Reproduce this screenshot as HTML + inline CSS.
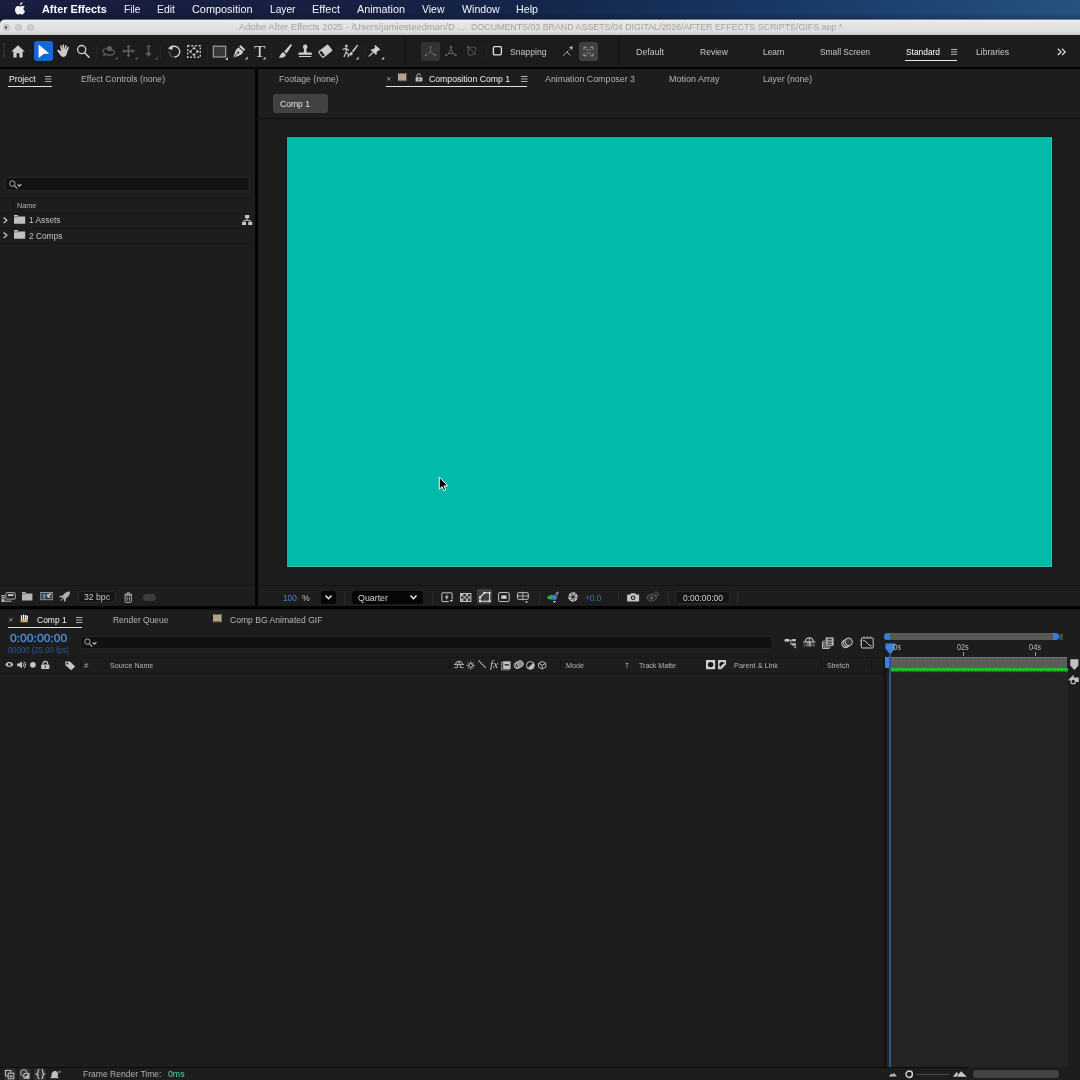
<!DOCTYPE html>
<html lang="en"><head><meta charset="utf-8"><title>Adobe After Effects 2025</title>
<style>
html,body{margin:0;padding:0;background:#1d1d1d;}
body{width:1080px;height:1080px;position:relative;overflow:hidden;font-family:"Liberation Sans",sans-serif;}
.b{position:absolute;box-sizing:border-box;}
.labels{position:absolute;left:0;top:0;width:1080px;height:1080px;will-change:transform;pointer-events:none;}
.t{position:absolute;white-space:pre;transform-origin:0 50%;line-height:1;}
svg{position:absolute;overflow:visible;}
</style></head><body>
<!-- macOS menu bar -->
<section id="menubar" aria-label="macOS menu bar">
<div class="b" style="left:0px;top:0px;width:1080px;height:24px;background:linear-gradient(180deg,rgba(0,0,0,0) 50%,rgba(0,0,0,0.22) 83%),linear-gradient(90deg,#191d3f 0%,#171f42 30%,#14264b 50%,#173762 70%,#1f4775 88%,#265282 100%);"></div>
<svg style="left:14.8px;top:2.2px" width="12" height="14.5" viewBox="0 0 12 14.5" ><path transform="scale(0.9)" fill="#f2f2f4" d="M8.3 0.2c0.1 0.9-0.3 1.7-0.8 2.3-0.5 0.6-1.3 1-2.1 0.95-0.1-0.85 0.3-1.7 0.8-2.25C6.7 0.65 7.6 0.25 8.3 0.2zM10.9 4.9c-0.9 0.55-1.5 1.4-1.5 2.5 0 1.25 0.75 2.2 1.8 2.6-0.25 0.8-0.6 1.5-1.1 2.2-0.6 0.85-1.2 1.7-2.2 1.7-0.95 0-1.2-0.55-2.3-0.55-1.05 0-1.4 0.57-2.3 0.57-0.95 0-1.6-0.9-2.2-1.75C0.1 10.7-0.5 8.3 0.6 6.3c0.6-1.1 1.7-1.8 2.9-1.8 0.95 0 1.8 0.62 2.35 0.62 0.55 0 1.6-0.75 2.7-0.64 0.45 0.02 1.7 0.18 2.35 0.42z"/></svg>
<div class="labels">
<span class="t" style="left:41.6px;top:3.65px;font-size:11px;color:#ffffff;font-weight:700;transform:scaleX(0.991);">After Effects</span>
<span class="t" style="left:123.75px;top:3.65px;font-size:11px;color:#f4f4f6;transform:scaleX(0.916);">File</span>
<span class="t" style="left:157px;top:3.65px;font-size:11px;color:#f4f4f6;transform:scaleX(0.949);">Edit</span>
<span class="t" style="left:192px;top:3.65px;font-size:11px;color:#f4f4f6;transform:scaleX(0.990);">Composition</span>
<span class="t" style="left:269.5px;top:3.65px;font-size:11px;color:#f4f4f6;transform:scaleX(0.926);">Layer</span>
<span class="t" style="left:312px;top:3.65px;font-size:11px;color:#f4f4f6;transform:scaleX(1.002);">Effect</span>
<span class="t" style="left:357px;top:3.65px;font-size:11px;color:#f4f4f6;transform:scaleX(0.981);">Animation</span>
<span class="t" style="left:422px;top:3.65px;font-size:11px;color:#f4f4f6;transform:scaleX(0.951);">View</span>
<span class="t" style="left:461.75px;top:3.65px;font-size:11px;color:#f4f4f6;transform:scaleX(0.965);">Window</span>
<span class="t" style="left:516px;top:3.65px;font-size:11px;color:#f4f4f6;transform:scaleX(0.972);">Help</span>
</div>
</section>
<!-- Window title bar -->
<section id="titlebar" aria-label="Window title bar">
<div class="b" style="left:3px;top:19px;width:1077px;height:1px;background:rgba(236,236,236,0.42);"></div>
<div class="b" style="left:0px;top:20px;width:1080px;height:15px;background:linear-gradient(180deg,#f0f0f0 0%,#e4e4e4 25%,#dedede 80%,#cacaca 100%);border-radius:4px 0 0 0;"></div>
<div class="b" style="left:2.5px;top:24px;width:7px;height:7px;background:#cfcfcf;border-radius:50%;border:0.5px solid #bdbdbd;"></div>
<div class="b" style="left:14.5px;top:24px;width:7px;height:7px;background:#cfcfcf;border-radius:50%;border:0.5px solid #bdbdbd;"></div>
<div class="b" style="left:26.5px;top:24px;width:7px;height:7px;background:#cfcfcf;border-radius:50%;border:0.5px solid #bdbdbd;"></div>
<div class="b" style="left:4.8px;top:26.3px;width:2.4px;height:2.4px;background:#555;border-radius:50%;"></div>
<div class="labels">
<span class="t" style="left:238.75px;top:22.80px;font-size:9.2px;color:#a4a4a4;transform:scaleX(1.026);">Adobe After Effects 2025 - /Users/jamiesteedman/D ...</span>
<span class="t" style="left:471px;top:22.80px;font-size:9.2px;color:#a4a4a4;transform:scaleX(0.962);">DOCUMENTS/03 BRAND ASSETS/04 DIGITAL/2026/AFTER EFFECTS SCRIPTS/GIFS.aep *</span>
</div>
</section>
<!-- Tools and workspaces -->
<section id="toolbar" aria-label="Tools and workspaces">
<div class="b" style="left:0px;top:35px;width:1080px;height:32px;background:#1c1c1c;"></div>
<div class="b" style="left:34px;top:41px;width:18.5px;height:20px;background:#1568d8;border-radius:3px;"></div>
<div class="b" style="left:421px;top:42px;width:19px;height:18.5px;background:#323232;border-radius:3px;"></div>
<div class="b" style="left:579px;top:41.6px;width:19px;height:19px;background:#414141;border-radius:3px;"></div>
<div class="b" style="left:96px;top:44px;width:1px;height:15px;background:#232323;"></div>
<div class="b" style="left:160px;top:44px;width:1px;height:15px;background:#232323;"></div>
<div class="b" style="left:207px;top:44px;width:1px;height:15px;background:#232323;"></div>
<div class="b" style="left:270.5px;top:44px;width:1px;height:15px;background:#232323;"></div>
<div class="b" style="left:337px;top:44px;width:1px;height:15px;background:#232323;"></div>
<div class="b" style="left:363.5px;top:44px;width:1px;height:15px;background:#232323;"></div>
<div class="b" style="left:405px;top:36px;width:1px;height:30px;background:#111;"></div>
<div class="b" style="left:485.5px;top:44px;width:1px;height:15px;background:#252525;"></div>
<div class="b" style="left:617.5px;top:36px;width:1px;height:30px;background:#111;"></div>
<div class="b" style="left:905px;top:59.6px;width:52px;height:1.5px;background:#e8e8e8;"></div>
<svg style="left:3px;top:43px" width="2" height="15" viewBox="0 0 2 15" ><path d="M1 0V15" stroke="#3c3c3c" stroke-width="1.6" stroke-dasharray="1.2 0.8"/></svg>
<svg style="left:11px;top:44.5px" width="14" height="13" viewBox="0 0 14 13" ><path fill="#cdcdcd" d="M7 0.3L0.3 6.6H2.4V12.4H5.6V8.2H8.4V12.4H11.6V6.6H13.7Z"/></svg>
<svg style="left:36px;top:42px" width="16" height="18" viewBox="0 0 16 18" ><path fill="#ffffff" d="M2.6 2.4L13.2 11.6L7.6 12L2.6 16Z"/></svg>
<svg style="left:56.5px;top:44px" width="13" height="13.5" viewBox="0 0 13 13.5" ><path fill="#cdcdcd" d="M4.1 7.2L3.2 2.2c-0.2-1 1.2-1.3 1.45-0.3L5.6 5.6L5.5 0.9c0-1 1.5-1 1.55 0L7.3 5.5L8.3 1.5c0.25-1 1.65-0.7 1.45 0.3L9 6.2l1.5-2.9c0.5-0.9 1.7-0.3 1.3 0.6L10.1 8.6c-0.4 2.6-1.4 4.3-3.6 4.3-2 0-2.9-1.2-3.9-2.9L0.4 6.9c-0.5-0.9 0.7-1.7 1.4-0.8Z"/></svg>
<svg style="left:76px;top:44px" width="15" height="15" viewBox="0 0 15 15" ><circle cx="5.7" cy="5.6" r="4.1" fill="none" stroke="#cdcdcd" stroke-width="1.3"/><path d="M8.7 8.7L13 13.2" stroke="#cdcdcd" stroke-width="1.6" stroke-linecap="round"/></svg>
<svg style="left:101px;top:44px" width="18" height="16" viewBox="0 0 18 16" ><circle cx="8.5" cy="4.6" r="2.6" fill="#5e5e5e"/><ellipse cx="7.6" cy="7.8" rx="5.8" ry="3.1" fill="none" stroke="#5e5e5e" stroke-width="1.3" transform="rotate(12 7.6 7.8)"/><path d="M3.3 9.3l1.2 2.4-2.7 0.3z" fill="#5e5e5e"/><path d="M16.8 12.4V15.4H13.8Z" fill="#5a5a5a"/></svg>
<svg style="left:122px;top:44px" width="16" height="16" viewBox="0 0 16 16" ><path d="M6.5 2V12M1.5 7H11.5" stroke="#5e5e5e" stroke-width="1.3"/><circle cx="6.5" cy="7" r="1.6" fill="#5e5e5e"/><path fill="#5e5e5e" d="M6.5 0.6L8.6 3.2H4.4ZM6.5 13.4L8.6 10.8H4.4ZM0.1 7L2.7 4.9V9.1ZM12.9 7L10.3 4.9V9.1Z"/><path d="M15.8 12.4V15.4H12.8Z" fill="#5a5a5a"/></svg>
<svg style="left:143px;top:44px" width="16" height="16" viewBox="0 0 16 16" ><path d="M5.5 2.2V10.5M3.7 2.2H7.3" stroke="#5e5e5e" stroke-width="1.4"/><path fill="#5e5e5e" d="M5.5 13L2.2 8.8H8.8Z"/><path d="M14.6 12.4V15.4H11.6Z" fill="#5a5a5a"/></svg>
<svg style="left:167px;top:44px" width="15" height="15" viewBox="0 0 15 15" ><path d="M3.2 4.1A5.4 5.4 0 1 1 7.6 13" fill="none" stroke="#cdcdcd" stroke-width="1.4"/><path d="M7.6 13A5.4 5.4 0 0 1 2.3 6.6" fill="none" stroke="#9a9a9a" stroke-width="1.3" stroke-dasharray="1 1.3"/><path fill="#cdcdcd" d="M0.9 4.3L5.6 1.1L5.4 6.2Z"/></svg>
<svg style="left:187px;top:44.5px" width="14" height="13" viewBox="0 0 14 13" ><rect x="0.7" y="0.7" width="12.6" height="11.6" fill="none" stroke="#bdbdbd" stroke-width="1.4" stroke-dasharray="2 1.6"/><path fill="#c8c8c8" d="M7 1.6L9 4.2H5ZM7 11.4L9 8.8H5ZM1.8 6.5L4.6 4.5V8.5ZM12.2 6.5L9.4 4.5V8.5Z"/><rect x="5.6" y="5.1" width="2.8" height="2.8" fill="#0e0e0e"/></svg>
<svg style="left:212px;top:44.5px" width="17" height="16" viewBox="0 0 17 16" ><rect x="1.3" y="1.2" width="12.4" height="10.8" fill="#383838" stroke="#a8a8a8" stroke-width="1.1"/><path d="M16 11.9V14.9H13Z" fill="#bdbdbd"/></svg>
<svg style="left:232px;top:44px" width="17" height="16" viewBox="0 0 17 16" ><path fill="#cdcdcd" d="M8.6 1.1L13.3 5.4L11.8 7L7.1 2.7ZM6.6 3.4L11.1 7.6C10.6 10.4 9.3 11.3 1.2 13.6C3.6 6.2 4.2 4.4 6.6 3.4ZM1.9 12.9L5.6 9.2" /><path d="M1.6 13.2L5.9 8.9" stroke="#1d1d1d" stroke-width="0.9"/><circle cx="6.3" cy="8.5" r="1" fill="#1d1d1d"/><path d="M15.6 12.4V15.4H12.6Z" fill="#bdbdbd"/></svg>
<svg style="left:278px;top:44px" width="15" height="15" viewBox="0 0 15 15" ><path fill="#cdcdcd" d="M12.3 0.5c0.9-0.5 1.9 0.4 1.3 1.3L8.6 9.6L6.2 7.4ZM5.4 8.2L7.8 10.4C7.6 12.8 5.2 14.2 0.6 13.4C2.8 12.4 2.2 8.8 5.4 8.2Z"/></svg>
<svg style="left:297.5px;top:44px" width="15" height="14" viewBox="0 0 15 14" ><circle cx="7.2" cy="2.9" r="2.3" fill="#cdcdcd"/><path fill="#cdcdcd" d="M6.1 4.5H8.3L8.7 8.4H13.2c0.5 0 0.7 0.3 0.7 0.7V10.8H0.5V9.1c0-0.4 0.2-0.7 0.7-0.7H5.7ZM1 11.9H13.4V13H1Z"/></svg>
<svg style="left:317.5px;top:43.5px" width="15" height="15" viewBox="0 0 15 15" ><g transform="rotate(-38 7.3 7.2)"><rect x="1.2" y="3.5" width="12" height="7.4" rx="0.8" fill="#cdcdcd"/><rect x="2" y="4.3" width="2.4" height="5.8" fill="#1d1d1d"/><rect x="1.2" y="3.5" width="12" height="7.4" rx="0.8" fill="none" stroke="#cdcdcd" stroke-width="0.8"/></g></svg>
<svg style="left:342px;top:44px" width="18" height="16" viewBox="0 0 18 16" ><circle cx="4.3" cy="2" r="1.5" fill="#bdbdbd"/><path d="M1 5.3L4.3 4.4L6.6 6.3M4.3 4.4L4.1 8.2L2.2 12.6M4.1 8.2L6.3 10L6.2 12.8" fill="none" stroke="#bdbdbd" stroke-width="1.3" stroke-linejoin="round" stroke-linecap="round"/><path fill="#cdcdcd" d="M15.2 0.8c0.6-0.4 1.2 0.2 0.9 0.8L11.4 8.3L10 7.1ZM9.3 7.7L10.9 9C10.8 10.9 9.3 11.9 6.4 11.5C7.8 10.8 7.4 8.4 9.3 7.7Z"/><path d="M16.6 12.4V15.4H13.6Z" fill="#bdbdbd"/></svg>
<svg style="left:367.5px;top:44px" width="18" height="16" viewBox="0 0 18 16" ><path fill="#cdcdcd" d="M7.3 0.9L12.4 5.6L11.3 6.6L10.5 6.3L8.6 8.3C9 9.4 8.8 10.3 8.1 11.1L2.4 5.8C3.2 5.1 4.2 5 5.2 5.3L7.1 3.4L6.4 2Z"/><path d="M4.8 8.6L1.1 12.1" stroke="#cdcdcd" stroke-width="1.3" stroke-linecap="round"/><path d="M16.2 12.4V15.4H13.2Z" fill="#bdbdbd"/></svg>
<svg style="left:421px;top:42px" width="20" height="19" viewBox="0 0 20 19" ><path d="M9.5 9.8V5.000000000000001M9.5 9.8L4.8 13.200000000000001M9.5 9.8L14.2 13.200000000000001" stroke="#6c6c6c" stroke-width="0.9" fill="none"/><rect x="8.6" y="4.1" width="1.8" height="1.8" fill="#6c6c6c"/><rect x="3.9" y="12.3" width="1.8" height="1.8" fill="#6c6c6c"/><rect x="13.3" y="12.3" width="1.8" height="1.8" fill="#6c6c6c"/></svg>
<svg style="left:441px;top:42px" width="20" height="19" viewBox="0 0 20 19" ><path d="M10 9.8V5.000000000000001M10 9.8L5.3 13.200000000000001M10 9.8L14.7 13.200000000000001" stroke="#6c6c6c" stroke-width="0.9" fill="none"/><rect x="9.1" y="4.1" width="1.8" height="1.8" fill="#6c6c6c"/><rect x="4.4" y="12.3" width="1.8" height="1.8" fill="#6c6c6c"/><rect x="13.8" y="12.3" width="1.8" height="1.8" fill="#6c6c6c"/><path d="M10 7.200000000000001L7.5 11.5H12.5Z" fill="#1c1c1c" stroke="#6c6c6c" stroke-width="0.9"/></svg>
<svg style="left:462px;top:42px" width="20" height="19" viewBox="0 0 20 19" ><g stroke="#606060" stroke-width="0.9" fill="none"><path d="M5.6 4.6L14 13M5.6 4.6h2.2M5.6 4.6v2.2"/><path d="M7 6.6C9 5 12 4.6 13.4 5.4C14 7 13.4 10 12 12C10 13.4 7.4 13.6 6.4 12.8C5.8 11 6 8.4 7 6.6Z"/></g></svg>
<svg style="left:492px;top:45px" width="11" height="11.5" viewBox="0 0 11 11.5" ><rect x="1.4" y="1.6" width="8" height="8.3" rx="1.3" fill="#1b1b1b" stroke="#e2e2e2" stroke-width="1.3"/></svg>
<svg style="left:562px;top:45px" width="12" height="12" viewBox="0 0 12 12" ><g stroke="#a8a8a8" stroke-width="1" fill="none"><path d="M1.2 10.8L5 7L8.4 10.4"/><path d="M5 7L8 4" stroke-dasharray="1.4 1"/></g><path fill="#c4c4c4" d="M10.8 1.2L10 5L7.1 2.1Z"/></svg>
<svg style="left:583px;top:45.5px" width="12" height="12" viewBox="0 0 12 12" ><g stroke="#a6a6a6" stroke-width="1" fill="none"><path d="M1 3.6V1.2H3.6M7.4 1.2H10V3.6M10 7.4V9.8H7.4M3.6 9.8H1V7.4"/><path d="M4 4.4V3.6H4.8M6.2 3.6H7V4.4M7 6.6V7.4H6.2M4.8 7.4H4V6.6"/></g></svg>
<svg style="left:951px;top:48.8px" width="6.2" height="5.8" viewBox="0 0 6.2 5.8" ><path d="M0 0.5H6.2M0 2.9H6.2M0 5.3H6.2" stroke="#c8c8c8" stroke-width="0.9"/></svg>
<svg style="left:1057px;top:47.5px" width="10" height="8" viewBox="0 0 10 8" ><path d="M0.8 0.8L4 3.9L0.8 7M5 0.8L8.2 3.9L5 7" fill="none" stroke="#d8d8d8" stroke-width="1.3"/></svg>
<svg style="left:263.4px;top:56.8px" width="3" height="3" viewBox="0 0 3 3" ><path d="M2.6 -0.4V2.6H-0.4Z" fill="#bdbdbd"/></svg>
<div class="labels">
<span class="t" style="left:509.5px;top:47.20px;font-size:9.4px;color:#c8c8c8;transform:scaleX(0.921);">Snapping</span>
<span class="t" style="left:636px;top:47.35px;font-size:9.7px;color:#c8c8c8;transform:scaleX(0.912);">Default</span>
<span class="t" style="left:699.5px;top:47.35px;font-size:9.7px;color:#c8c8c8;transform:scaleX(0.881);">Review</span>
<span class="t" style="left:763px;top:47.35px;font-size:9.7px;color:#c8c8c8;transform:scaleX(0.868);">Learn</span>
<span class="t" style="left:820px;top:47.35px;font-size:9.7px;color:#c8c8c8;transform:scaleX(0.868);">Small Screen</span>
<span class="t" style="left:906px;top:47.35px;font-size:9.7px;color:#ffffff;transform:scaleX(0.865);">Standard</span>
<span class="t" style="left:976px;top:47.35px;font-size:9.7px;color:#c8c8c8;transform:scaleX(0.888);">Libraries</span>
<span class="t" style="left:254px;top:43.30px;font-size:17px;color:#cdcdcd;font-family:'Liberation Serif',serif;transform:scaleX(1.107);">T</span>
</div>
</section>
<!-- Project panel -->
<section id="project" aria-label="Project panel">
<div class="b" style="left:0px;top:66.5px;width:1080px;height:2px;background:#030303;"></div>
<div class="b" style="left:0px;top:68.5px;width:255px;height:538px;background:#1d1d1d;"></div>
<div class="b" style="left:8.2px;top:85.8px;width:43.5px;height:1.4px;background:#dedede;"></div>
<div class="b" style="left:4.5px;top:177px;width:245px;height:14px;background:#121212;border-radius:3px;border:1px solid #2a2a2a;"></div>
<div class="b" style="left:0px;top:197.5px;width:251px;height:1px;background:#171717;"></div>
<div class="b" style="left:0px;top:212.5px;width:251px;height:1px;background:#171717;"></div>
<div class="b" style="left:0px;top:227.5px;width:251px;height:1px;background:#171717;"></div>
<div class="b" style="left:0px;top:242.5px;width:251px;height:1px;background:#171717;"></div>
<div class="b" style="left:12.5px;top:201px;width:1px;height:10px;background:#111;"></div>
<div class="b" style="left:0px;top:585px;width:255px;height:1px;background:#141414;"></div>
<div class="b" style="left:78px;top:590.5px;width:38px;height:12.5px;background:#151515;border-radius:3px;border:1px solid #2a2a2a;"></div>
<div class="b" style="left:143px;top:594px;width:13px;height:6.5px;background:#3c3c3c;border-radius:3.5px;"></div>
<svg style="left:45px;top:75.6px" width="6.4" height="6" viewBox="0 0 6.4 6" ><path d="M0 0.5H6.4M0 3.0H6.4M0 5.5H6.4" stroke="#bdbdbd" stroke-width="0.9"/></svg>
<svg style="left:9.4px;top:180px" width="14" height="10" viewBox="0 0 14 10" ><circle cx="3.4" cy="3.6" r="2.7" fill="none" stroke="#b4b4b4" stroke-width="0.95"/><path d="M5.4 5.7L8.2 8.6" stroke="#b4b4b4" stroke-width="1.1"/><path d="M8.7 4.5L10.4 6.2L12.4 4.2" fill="none" stroke="#c0c0c0" stroke-width="1.1"/></svg>
<svg style="left:2.6px;top:217.2px" width="5" height="7" viewBox="0 0 5 7" ><path d="M0.6 0.5L3.9 3.3L0.6 6.1" fill="none" stroke="#cfcfcf" stroke-width="1.2"/></svg>
<svg style="left:2.6px;top:232.4px" width="5" height="7" viewBox="0 0 5 7" ><path d="M0.6 0.5L3.9 3.3L0.6 6.1" fill="none" stroke="#cfcfcf" stroke-width="1.2"/></svg>
<svg style="left:13.7px;top:215px" width="11.2" height="8.8" viewBox="0 0 11.2 8.8" ><path fill="#bfbfbf" d="M0 0H4.03V1.4H11.2V8.8H0Z"/><path d="M0 1.9H4.03" stroke="#1d1d1d" stroke-width="0.5"/></svg>
<svg style="left:13.7px;top:230.2px" width="11.2" height="8.8" viewBox="0 0 11.2 8.8" ><path fill="#bfbfbf" d="M0 0H4.03V1.4H11.2V8.8H0Z"/><path d="M0 1.9H4.03" stroke="#1d1d1d" stroke-width="0.5"/></svg>
<svg style="left:242px;top:215px" width="11" height="10" viewBox="0 0 11 10" ><g fill="#c4c4c4"><rect x="3" y="0" width="4.3" height="3.2"/><rect x="0" y="6.8" width="4" height="3.2"/><rect x="6.2" y="6.8" width="4" height="3.2"/></g><path d="M5.15 3V5.4M2 6.8V5.4H8.2V6.8" fill="none" stroke="#c4c4c4" stroke-width="0.9"/></svg>
<svg style="left:1px;top:592px" width="15" height="11" viewBox="0 0 15 11" ><rect x="4.9" y="0.6" width="9.4" height="6.6" rx="0.8" fill="#2a2a2a" stroke="#a0a0a0" stroke-width="1"/><rect x="7" y="2.2" width="5.4" height="1.8" fill="#c8c8c8"/><rect x="0.5" y="3" width="3" height="7" fill="#b8b8b8"/><path d="M0.5 8.6H10.6V9.8H0.5Z" fill="#a8a8a8"/><rect x="1.2" y="4" width="1.4" height="1.2" fill="#333"/><rect x="1.2" y="6" width="1.4" height="1.2" fill="#333"/></svg>
<svg style="left:21.7px;top:592px" width="10.4" height="8.4" viewBox="0 0 10.4 8.4" ><path fill="#b6b6b6" d="M0 0H3.74V1.4H10.4V8.4H0Z"/><path d="M0 1.9H3.74" stroke="#1d1d1d" stroke-width="0.5"/></svg>
<svg style="left:40px;top:592px" width="13" height="8.2" viewBox="0 0 13 8.2" ><rect width="13" height="8.2" fill="#9a9a9a"/><rect x="1.2" y="0.9" width="10.6" height="6.4" fill="#3a3a3a"/><circle cx="4.3" cy="3.6" r="1.9" fill="#3f7fd8"/><rect x="3.6" y="4.6" width="1.4" height="2.4" fill="#2fae9c"/><path d="M7 1.4L10.6 5.4H7.6Z" fill="#e8e8e8"/><rect x="8.6" y="1.6" width="2.4" height="1.6" fill="#dcdcdc"/><path d="M0.3 1.5H1M0.3 3.3H1M0.3 5.1H1M0.3 6.9H1M12 1.5H12.7M12 3.3H12.7M12 5.1H12.7M12 6.9H12.7" stroke="#222" stroke-width="0.8"/></svg>
<svg style="left:59px;top:590.8px" width="12" height="11" viewBox="0 0 12 11" ><path fill="#b0b0b0" d="M11 0.4C8 0.2 5.6 1.6 3.9 4.4L1 4.8L0.2 6.2L3 6.4L5 8.4L5.3 10.8L6.6 10.2L7 7.3C9.8 5.7 11.2 3.4 11 0.4Z"/><path fill="#b0b0b0" d="M2.6 7.4L3.9 8.7L1.4 9.9Z"/></svg>
<svg style="left:124px;top:591.5px" width="9" height="11" viewBox="0 0 9 11" ><path d="M0.4 2.3H8.2M3 2.1V0.8H5.6V2.1" fill="none" stroke="#ababab" stroke-width="1"/><path d="M1.2 3.2H7.4V9.6a0.8 0.8 0 0 1-0.8 0.8H2a0.8 0.8 0 0 1-0.8-0.8Z" fill="none" stroke="#ababab" stroke-width="1"/><path d="M3.2 4.6V8.8M5.4 4.6V8.8" stroke="#ababab" stroke-width="0.9"/></svg>
<div class="labels">
<span class="t" style="left:9.4px;top:73.70px;font-size:9.6px;color:#f0f0f0;transform:scaleX(0.894);">Project</span>
<span class="t" style="left:81px;top:73.70px;font-size:9.6px;color:#b4b4b4;transform:scaleX(0.902);">Effect Controls (none)</span>
<span class="t" style="left:17px;top:201.80px;font-size:8px;color:#b0b0b0;transform:scaleX(0.904);">Name</span>
<span class="t" style="left:28.5px;top:215.95px;font-size:9.2px;color:#c4c4c4;transform:scaleX(0.907);">1 Assets</span>
<span class="t" style="left:28.5px;top:231.55px;font-size:9.2px;color:#c4c4c4;transform:scaleX(0.908);">2 Comps</span>
<span class="t" style="left:84px;top:592.40px;font-size:9.6px;color:#c4c4c4;transform:scaleX(0.902);">32 bpc</span>
</div>
</section>
<!-- Composition viewer panel -->
<section id="viewer" aria-label="Composition viewer panel">
<div class="b" style="left:255px;top:68px;width:3px;height:538px;background:#030303;"></div>
<div class="b" style="left:258px;top:68.5px;width:822px;height:538px;background:#1d1d1d;"></div>
<div class="b" style="left:386px;top:85.8px;width:141px;height:1.4px;background:#dedede;"></div>
<div class="b" style="left:273px;top:94px;width:55px;height:19px;background:#424242;border-radius:3px;"></div>
<div class="b" style="left:258px;top:118px;width:822px;height:1px;background:#0e0e0e;"></div>
<div class="b" style="left:258px;top:119px;width:822px;height:466px;background:#1c1c1c;"></div>
<div class="b" style="left:287px;top:137px;width:765px;height:430px;background:#01baa9;box-shadow:0 0 0 1px #0e1815, inset -1px -1px 0 rgba(190,200,198,0.35);"></div>
<div class="b" style="left:258px;top:585px;width:822px;height:1px;background:#121212;"></div>
<div class="b" style="left:321px;top:591px;width:15px;height:13px;background:#060606;border-radius:3px;"></div>
<div class="b" style="left:352px;top:591px;width:71px;height:13px;background:#060606;border-radius:3px;"></div>
<div class="b" style="left:477.3px;top:589.2px;width:14.8px;height:14.7px;background:#404040;border-radius:3px;"></div>
<div class="b" style="left:675px;top:590.5px;width:55px;height:13.5px;background:#141414;border-radius:3px;border:1px solid #2a2a2a;"></div>
<div class="b" style="left:344px;top:592px;width:1px;height:12px;background:#2c2c2c;"></div>
<div class="b" style="left:432px;top:592px;width:1px;height:12px;background:#2c2c2c;"></div>
<div class="b" style="left:539px;top:592px;width:1px;height:12px;background:#2c2c2c;"></div>
<div class="b" style="left:618px;top:592px;width:1px;height:12px;background:#2c2c2c;"></div>
<div class="b" style="left:667.5px;top:592px;width:1px;height:12px;background:#2c2c2c;"></div>
<div class="b" style="left:737px;top:592px;width:1px;height:12px;background:#2c2c2c;"></div>
<svg style="left:520.5px;top:75.6px" width="6.6" height="6" viewBox="0 0 6.6 6" ><path d="M0 0.5H6.6M0 3.0H6.6M0 5.5H6.6" stroke="#bdbdbd" stroke-width="0.9"/></svg>
<svg style="left:387px;top:77.2px" width="3.6" height="3.6" viewBox="0 0 3.6 3.6" ><path d="M0.2 0.2L3.4 3.4M3.4 0.2L0.2 3.4" stroke="#a8a8a8" stroke-width="0.9"/></svg>
<svg style="left:398px;top:73.2px" width="8.4" height="8.2" viewBox="0 0 8.4 8.2" ><rect width="8.4" height="8.2" fill="#b3a484"/><rect x="0.90" y="0" width="0.9" height="1" fill="#1d1d1d"/><rect x="0.90" y="7.2" width="0.9" height="1" fill="#1d1d1d"/><rect x="2.65" y="0" width="0.9" height="1" fill="#1d1d1d"/><rect x="2.65" y="7.2" width="0.9" height="1" fill="#1d1d1d"/><rect x="4.40" y="0" width="0.9" height="1" fill="#1d1d1d"/><rect x="4.40" y="7.2" width="0.9" height="1" fill="#1d1d1d"/><rect x="6.15" y="0" width="0.9" height="1" fill="#1d1d1d"/><rect x="6.15" y="7.2" width="0.9" height="1" fill="#1d1d1d"/></svg>
<svg style="left:414.5px;top:72.5px" width="8" height="9" viewBox="0 0 8 9" ><rect x="0.6" y="4.2" width="6.8" height="4.4" rx="0.6" fill="#bdbdbd"/><path d="M2 4.2V2.4a1.7 1.7 0 0 1 3.4 0V3" fill="none" stroke="#bdbdbd" stroke-width="1"/><rect x="3.4" y="5.6" width="1.2" height="1.8" fill="#1d1d1d"/></svg>
<svg style="left:325px;top:595.4px" width="7" height="5.2" viewBox="0 0 7 5.2" ><path d="M0.5 0.6L3.5 3.85L6.5 0.6" fill="none" stroke="#f0f0f0" stroke-width="1.4"/></svg>
<svg style="left:409.5px;top:595.4px" width="7" height="5.2" viewBox="0 0 7 5.2" ><path d="M0.5 0.6L3.5 3.85L6.5 0.6" fill="none" stroke="#f0f0f0" stroke-width="1.4"/></svg>
<svg style="left:440.5px;top:591.5px" width="13" height="11" viewBox="0 0 13 11" ><rect x="0.9" y="0.8" width="10.2" height="8.8" rx="0.6" fill="none" stroke="#c4c4c4" stroke-width="1"/><path fill="#d0d0d0" d="M6.6 1.9L3.9 5.6H5.7L4.8 8.6L7.9 4.6H6Z"/><rect x="7.8" y="7.6" width="5" height="3.4" fill="#1d1d1d"/><path fill="#c8c8c8" d="M8.6 8L12 8L10.3 10Z"/></svg>
<svg style="left:460px;top:592.6px" width="11.4" height="9" viewBox="0 0 11.4 9" ><rect x="0.5" y="0.5" width="10.4" height="8" fill="#2a2a2a" stroke="#bdbdbd" stroke-width="1"/><g fill="#b4b4b4"><rect x="1" y="1" width="2.4" height="2.3"/><rect x="5.8" y="1" width="2.4" height="2.3"/><rect x="3.4" y="3.3" width="2.4" height="2.3"/><rect x="8.2" y="3.3" width="2.4" height="2.3"/><rect x="1" y="5.6" width="2.4" height="2.3"/><rect x="5.8" y="5.6" width="2.4" height="2.3"/></g></svg>
<svg style="left:478px;top:591px" width="13" height="12" viewBox="0 0 13 12" ><path d="M2 10.2H11.6V1.8H6.4L2 6.3Z" fill="none" stroke="#e4e4e4" stroke-width="1.1"/><g fill="#f0f0f0"><rect x="1.1" y="9.3" width="1.8" height="1.8"/><rect x="10.7" y="9.3" width="1.8" height="1.8"/><rect x="10.7" y="0.9" width="1.8" height="1.8"/><rect x="5.5" y="0.9" width="1.8" height="1.8"/><rect x="1.1" y="5.4" width="1.8" height="1.8"/></g></svg>
<svg style="left:498px;top:591.6px" width="12" height="10.4" viewBox="0 0 12 10.4" ><rect x="0.6" y="0.6" width="10.6" height="9" rx="1.4" fill="none" stroke="#c4c4c4" stroke-width="1"/><rect x="3.3" y="3.4" width="5.2" height="3.4" fill="#d0d0d0"/></svg>
<svg style="left:516px;top:591px" width="14" height="13" viewBox="0 0 14 13" ><rect x="1.6" y="1.7" width="10.6" height="6.6" rx="0.5" fill="none" stroke="#c0c0c0" stroke-width="1"/><path d="M6.9 0.6V9.4M0.6 5H13.2" stroke="#c0c0c0" stroke-width="0.9"/><path fill="#c8c8c8" d="M8.9 10.4H12.3L10.6 12.3Z"/></svg>
<svg style="left:547px;top:591px" width="13" height="12.4" viewBox="0 0 13 12.4" ><path fill="#8a8a8a" d="M8.2 2.4L10.6 0.2L11.7 1.2L10.6 4.6Z"/><circle cx="4" cy="6.4" r="2.3" fill="#22b040"/><path fill="#1ecb3a" d="M0.6 4.4L3.2 6.4L0.8 8.4Z"/><circle cx="7.4" cy="6.3" r="2.6" fill="#3c7ed8"/><path fill="#c8c8c8" d="M5.6 10H9.2L7.4 11.9Z"/></svg>
<svg style="left:567.5px;top:591.8px" width="10" height="10" viewBox="0 0 10 10" ><circle cx="5" cy="5" r="4.7" fill="#c6c6c6"/><circle cx="5" cy="5" r="1.5" fill="#1d1d1d"/><g stroke="#1d1d1d" stroke-width="0.8"><path d="M5 3.5L8.4 1.6M6.4 4.4L9.6 6.2M6.2 6L6 9.6M5 6.5L1.6 8.4M3.6 5.6L0.4 3.8M3.8 4L4 0.4"/></g></svg>
<svg style="left:627px;top:593.2px" width="12.2" height="8.6" viewBox="0 0 12.2 8.6" ><path fill="#c2c2c2" d="M0.8 1.5H3.2L4 0.2H8.2L9 1.5H11.4a0.7 0.7 0 0 1 0.7 0.7V7.8a0.7 0.7 0 0 1-0.7 0.7H0.8a0.7 0.7 0 0 1-0.7-0.7V2.2a0.7 0.7 0 0 1 0.7-0.7Z"/><circle cx="6.1" cy="4.8" r="2.3" fill="#1d1d1d"/><circle cx="6.1" cy="4.8" r="1.2" fill="#c2c2c2"/></svg>
<svg style="left:645.5px;top:591px" width="13" height="11" viewBox="0 0 13 11" ><path d="M0.6 6.8C2.4 4.2 4 3.4 5.6 3.4S8.8 4.2 10.6 6.8C8.8 9.3 7.2 10.2 5.6 10.2S2.4 9.3 0.6 6.8Z" fill="none" stroke="#585858" stroke-width="1.1"/><circle cx="5.6" cy="6.8" r="1.9" fill="#585858"/><path d="M7.4 1.9H8.3L8.8 1.1H11L11.5 1.9H12.3V5H9.6" fill="none" stroke="#585858" stroke-width="0.9"/><circle cx="9.9" cy="3.3" r="0.9" fill="#585858"/></svg>
<svg style="left:437.6px;top:476px" width="12" height="16" viewBox="0 0 12 16" ><g transform="translate(1.3,1) scale(0.74)"><path d="M0 0V16.5L3.8 12.9L6.2 18.5L8.7 17.4L6.3 12H11.4Z" fill="#000" stroke="#fff" stroke-width="1.3" stroke-linejoin="round"/></g></svg>
<div class="labels">
<span class="t" style="left:278.5px;top:73.70px;font-size:9.6px;color:#b4b4b4;transform:scaleX(0.907);">Footage (none)</span>
<span class="t" style="left:429.3px;top:73.70px;font-size:9.6px;color:#f0f0f0;transform:scaleX(0.905);">Composition Comp 1</span>
<span class="t" style="left:545px;top:73.70px;font-size:9.6px;color:#b4b4b4;transform:scaleX(0.922);">Animation Composer 3</span>
<span class="t" style="left:668.5px;top:73.70px;font-size:9.6px;color:#b4b4b4;transform:scaleX(0.938);">Motion Array</span>
<span class="t" style="left:763px;top:73.70px;font-size:9.6px;color:#b4b4b4;transform:scaleX(0.901);">Layer (none)</span>
<span class="t" style="left:279.9px;top:99.40px;font-size:9.7px;color:#e0e0e0;transform:scaleX(0.884);">Comp 1</span>
<span class="t" style="left:282.7px;top:593.05px;font-size:9.7px;color:#4682d4;transform:scaleX(0.853);">100</span>
<span class="t" style="left:301.7px;top:593.05px;font-size:9.7px;color:#c4c4c4;transform:scaleX(0.893);">%</span>
<span class="t" style="left:358.3px;top:593.05px;font-size:9.7px;color:#d4d4d4;transform:scaleX(0.913);">Quarter</span>
<span class="t" style="left:585.2px;top:594.40px;font-size:9.2px;color:#3b6cb6;transform:scaleX(0.899);">+0.0</span>
<span class="t" style="left:682.5px;top:592.85px;font-size:9.5px;color:#d0d0d0;transform:scaleX(0.891);">0:00:00:00</span>
</div>
</section>
<!-- Timeline panel -->
<section id="timeline" aria-label="Timeline panel">
<div class="b" style="left:0px;top:606px;width:1080px;height:3px;background:#030303;"></div>
<div class="b" style="left:0px;top:609px;width:1080px;height:1px;background:#131313;"></div>
<div class="b" style="left:0px;top:610px;width:1080px;height:470px;background:#1d1d1d;"></div>
<div class="b" style="left:8px;top:626.8px;width:74px;height:1.4px;background:#dedede;"></div>
<div class="b" style="left:79.5px;top:635.5px;width:693.5px;height:13.8px;background:#111111;border-radius:3px;border:1px solid #242424;"></div>
<div class="b" style="left:0px;top:656.5px;width:883px;height:1px;background:#171717;"></div>
<div class="b" style="left:0px;top:673px;width:883px;height:1px;background:#151515;"></div>
<div class="b" style="left:54.5px;top:660px;width:1px;height:9px;background:#131313;"></div>
<div class="b" style="left:79.5px;top:660px;width:1px;height:9px;background:#131313;"></div>
<div class="b" style="left:105.5px;top:660px;width:1px;height:9px;background:#131313;"></div>
<div class="b" style="left:449px;top:660px;width:1px;height:9px;background:#131313;"></div>
<div class="b" style="left:560px;top:660px;width:1px;height:9px;background:#131313;"></div>
<div class="b" style="left:821px;top:660px;width:1px;height:9px;background:#131313;"></div>
<div class="b" style="left:871px;top:660px;width:1px;height:9px;background:#131313;"></div>
<div class="b" style="left:883.2px;top:657px;width:3.8px;height:410px;background:#151515;"></div>
<div class="b" style="left:887px;top:672px;width:180.5px;height:395px;background:#242424;"></div>
<div class="b" style="left:884px;top:633.2px;width:174px;height:7px;background:#595959;border-radius:3.5px;"></div>
<div class="b" style="left:883.6px;top:633.2px;width:6.2px;height:7px;background:#2f7fe0;border-radius:3.5px 0 0 3.5px;"></div>
<div class="b" style="left:1053px;top:633.2px;width:5.5px;height:7px;background:#2f7fe0;border-radius:0 3.5px 3.5px 0;"></div>
<div class="b" style="left:1058.5px;top:633.6px;width:4.2px;height:6.4px;background:#454545;"></div>
<div class="b" style="left:962.5px;top:652px;width:1px;height:3.5px;background:#9a9a9a;"></div>
<div class="b" style="left:1035px;top:652px;width:1px;height:3.5px;background:#9a9a9a;"></div>
<div class="b" style="left:885px;top:657px;width:182px;height:11px;background:#5b5b5b;border-top:1px dotted #8c8c8c;"></div>
<div class="b" style="left:884.5px;top:657px;width:5px;height:11px;background:#3b82d8;border-radius:2.5px;"></div>
<div class="b" style="left:889.5px;top:668px;width:178px;height:4px;background:#1fbf2a;border-bottom:1px solid #128a1a;"></div>
<div class="b" style="left:889.2px;top:655px;width:1.8px;height:412px;background:#2c5890;"></div>
<div class="b" style="left:0px;top:1067px;width:968px;height:1px;background:#0c0c0c;"></div>
<div class="b" style="left:0px;top:1068px;width:1080px;height:12px;background:#1d1d1d;"></div>
<div class="b" style="left:916px;top:1073.5px;width:33px;height:1px;background:#4a4a4a;"></div>
<div class="b" style="left:972.5px;top:1070px;width:86.5px;height:8px;background:#444444;border-radius:4px;"></div>
<svg style="left:76px;top:616.6px" width="6.4" height="6" viewBox="0 0 6.4 6" ><path d="M0 0.5H6.4M0 3.0H6.4M0 5.5H6.4" stroke="#bdbdbd" stroke-width="0.9"/></svg>
<svg style="left:9.2px;top:618.2px" width="3.6" height="3.6" viewBox="0 0 3.6 3.6" ><path d="M0.2 0.2L3.4 3.4M3.4 0.2L0.2 3.4" stroke="#a8a8a8" stroke-width="0.9"/></svg>
<svg style="left:213.2px;top:614.2px" width="8.6" height="8.2" viewBox="0 0 8.6 8.2" ><rect width="8.6" height="8.2" fill="#b3a484"/><rect x="0.90" y="0" width="0.9" height="1" fill="#1d1d1d"/><rect x="0.90" y="7.2" width="0.9" height="1" fill="#1d1d1d"/><rect x="2.70" y="0" width="0.9" height="1" fill="#1d1d1d"/><rect x="2.70" y="7.2" width="0.9" height="1" fill="#1d1d1d"/><rect x="4.50" y="0" width="0.9" height="1" fill="#1d1d1d"/><rect x="4.50" y="7.2" width="0.9" height="1" fill="#1d1d1d"/><rect x="6.30" y="0" width="0.9" height="1" fill="#1d1d1d"/><rect x="6.30" y="7.2" width="0.9" height="1" fill="#1d1d1d"/></svg>
<svg style="left:20.1px;top:613.9px" width="8.4" height="9.2" viewBox="0 0 8.4 9.2" ><rect x="0.2" y="0" width="8" height="9.2" fill="#0a0a0a"/><rect x="0.5" y="5" width="7.4" height="3.4" fill="#c2a874"/><path d="M1.5 0.9V5.2M3.6 0.4V5.2M5.6 0.9V5.2M7.3 1.6V5" stroke="#ffffff" stroke-width="1.3"/><path d="M0.6 1.6H2" stroke="#c2a874" stroke-width="0.8"/></svg>
<svg style="left:83.6px;top:638px" width="14" height="10" viewBox="0 0 14 10" ><circle cx="3.4" cy="3.6" r="2.7" fill="none" stroke="#b4b4b4" stroke-width="0.95"/><path d="M5.4 5.7L8.2 8.6" stroke="#b4b4b4" stroke-width="1.1"/><path d="M8.7 4.5L10.4 6.2L12.4 4.2" fill="none" stroke="#c0c0c0" stroke-width="1.1"/></svg>
<svg style="left:5px;top:662.4px" width="8.6" height="5.2" viewBox="0 0 8.6 5.2" ><path d="M0.2 2.6C1.6 0.7 2.9 0.1 4.3 0.1S7 0.7 8.4 2.6C7 4.5 5.7 5.1 4.3 5.1S1.6 4.5 0.2 2.6Z" fill="#c6c6c6"/><circle cx="4.3" cy="2.6" r="1.5" fill="#1d1d1d"/></svg>
<svg style="left:16.6px;top:661px" width="10" height="8" viewBox="0 0 10 8" ><path fill="#c6c6c6" d="M0.2 2.6H2.2L4.9 0.2V7.6L2.2 5.2H0.2Z"/><path d="M6 2.2A2.2 2.2 0 0 1 6 5.6M7 0.7A4 4 0 0 1 7 7.1" fill="none" stroke="#c6c6c6" stroke-width="1"/></svg>
<svg style="left:30.2px;top:662.2px" width="5.8" height="5.8" viewBox="0 0 5.8 5.8" ><circle cx="2.9" cy="2.9" r="2.8" fill="#c6c6c6"/></svg>
<svg style="left:40.6px;top:660.8px" width="8.6" height="8.2" viewBox="0 0 8.6 8.2" ><rect x="0.2" y="3.5" width="8.2" height="4.5" rx="0.5" fill="#c6c6c6"/><path d="M2 3.6V2.6a2.3 2.3 0 0 1 4.6 0V3.6" fill="none" stroke="#c6c6c6" stroke-width="1.2"/><rect x="3.7" y="4.8" width="1.2" height="1.9" fill="#1d1d1d"/></svg>
<svg style="left:64.5px;top:660.6px" width="11" height="9.6" viewBox="0 0 11 9.6" ><path fill="#c6c6c6" d="M0.4 0.6H4.8L10.2 5.6L6.2 9.3L0.4 4.2Z"/><circle cx="2.4" cy="2.5" r="0.9" fill="#1d1d1d"/></svg>
<svg style="left:453.5px;top:660.8px" width="10" height="7.4" viewBox="0 0 10 7.4" ><path d="M1.6 3.4A3.4 3.2 0 0 1 8.4 3.4" fill="none" stroke="#c0c0c0" stroke-width="1"/><path d="M0 3.6H10M0.4 6.6H3M7 6.6H9.6M3.6 3.6V6.8M6.4 3.6V6.8M5 1V3.4" stroke="#c0c0c0" stroke-width="0.9"/></svg>
<svg style="left:466px;top:660.6px" width="9.4" height="9" viewBox="0 0 9.4 9" ><circle cx="4.7" cy="4.4" r="1.9" fill="none" stroke="#c0c0c0" stroke-width="1"/><path d="M4.7 0.2V2M4.7 6.8V8.6M0.5 4.4H2.3M7.1 4.4H8.9M1.7 1.4L3 2.7M6.4 6.1L7.7 7.4M7.7 1.4L6.4 2.7M3 6.1L1.7 7.4" stroke="#c0c0c0" stroke-width="0.9"/></svg>
<svg style="left:478px;top:660.4px" width="9" height="9" viewBox="0 0 9 9" ><path d="M0.6 0.6L8 8" stroke="#c0c0c0" stroke-width="1.2" stroke-dasharray="1.6 0.5"/></svg>
<svg style="left:501px;top:660.6px" width="10" height="9.4" viewBox="0 0 10 9.4" ><rect x="0.5" y="1.5" width="7.4" height="7.4" fill="none" stroke="#8c8c8c" stroke-width="0.9"/><rect x="1.8" y="0.3" width="7.8" height="7.8" fill="#c4c4c4"/><rect x="3.6" y="3" width="4.2" height="1.6" fill="#3a3a3a"/><path d="M2.6 0.8V7.6M8.8 0.8V7.6" stroke="#6a6a6a" stroke-width="0.7" stroke-dasharray="0.8 0.8"/></svg>
<svg style="left:513px;top:660.4px" width="11.4" height="9.4" viewBox="0 0 11.4 9.4" ><g transform="rotate(-30 5.6 4.6)"><ellipse cx="3.7" cy="4.7" rx="2.9" ry="3" fill="none" stroke="#c0c0c0" stroke-width="0.9"/><ellipse cx="5.3" cy="4.7" rx="2.9" ry="3" fill="none" stroke="#c0c0c0" stroke-width="0.9"/><ellipse cx="7.3" cy="4.7" rx="3" ry="3.1" fill="#8a8a8a" stroke="#c0c0c0" stroke-width="0.9"/></g></svg>
<svg style="left:525.6px;top:660.6px" width="9" height="9" viewBox="0 0 9 9" ><circle cx="4.4" cy="4.4" r="3.9" fill="#1d1d1d" stroke="#c0c0c0" stroke-width="1"/><path d="M7.4 1.8A4 4 0 0 1 1.6 7.2Z" fill="#c0c0c0"/></svg>
<svg style="left:538px;top:660.8px" width="8.6" height="8.6" viewBox="0 0 8.6 8.6" ><path d="M4.2 0.5L7.8 2.3V6.1L4.2 8L0.6 6.1V2.3Z" fill="none" stroke="#c0c0c0" stroke-width="0.95"/><path d="M0.8 2.4L4.2 4.2L7.6 2.4M4.2 4.2V7.8" fill="none" stroke="#c0c0c0" stroke-width="0.9"/></svg>
<svg style="left:705.8px;top:660.2px" width="9.4" height="9.4" viewBox="0 0 9.4 9.4" ><rect x="0" y="0" width="9.2" height="9.2" fill="#cdcdcd"/><circle cx="4.6" cy="4.6" r="2.7" fill="#141414"/></svg>
<svg style="left:717.8px;top:660.2px" width="8.4" height="9.4" viewBox="0 0 8.4 9.4" ><path d="M0 0H8.1V4.4L3.4 9.2H0Z" fill="#c8c8c8"/><circle cx="4.1" cy="4.7" r="2.6" fill="#0c0c0c"/><path d="M6 2.9A2.6 2.6 0 0 1 2.3 6.6Z" fill="#d4d4d4"/></svg>
<svg style="left:784px;top:638px" width="13" height="11" viewBox="0 0 13 11" ><ellipse cx="3" cy="2.2" rx="2.8" ry="1.5" fill="#c4c4c4"/><rect x="8.2" y="1" width="3.6" height="2.4" fill="#c4c4c4"/><rect x="8.2" y="5.2" width="3.6" height="2.4" fill="#c4c4c4"/><path d="M5.6 2.2H8.4M6.9 2.2V6.4H8.4" fill="none" stroke="#c4c4c4" stroke-width="0.9"/><path fill="#c4c4c4" d="M9.6 8.6H12.6L11.1 10.4Z"/></svg>
<svg style="left:803.4px;top:637.4px" width="12.6" height="10" viewBox="0 0 12.6 10" ><path d="M2.4 4.6A3.9 3.8 0 0 1 10.2 4.6" fill="none" stroke="#c4c4c4" stroke-width="1.3"/><path d="M0.2 4.9H12.4" stroke="#c4c4c4" stroke-width="1.1"/><path d="M6.3 1.4V9.4M4.9 5V9.6M7.7 5V9.6" stroke="#c4c4c4" stroke-width="0.9"/><rect x="0.6" y="6.2" width="3.6" height="3.4" fill="#4e4e4e"/><rect x="8.4" y="6.2" width="3.6" height="3.4" fill="#4e4e4e"/></svg>
<svg style="left:822.2px;top:637px" width="12" height="12" viewBox="0 0 12 12" ><path d="M0.6 4.4V11.4H7.6" fill="none" stroke="#c4c4c4" stroke-width="1"/><path d="M2 3V10H8.6" fill="none" stroke="#c4c4c4" stroke-width="0.9"/><rect x="3.6" y="0.4" width="8" height="8.4" fill="#c4c4c4"/><rect x="5.4" y="1.6" width="4.4" height="1.8" fill="#3a3a3a"/><rect x="5.4" y="4.4" width="4.4" height="1.4" fill="#3a3a3a"/><rect x="5.4" y="6.6" width="4.4" height="1.2" fill="#3a3a3a"/><path d="M4.4 0.8V8.4M10.8 0.8V8.4" stroke="#8a7a5a" stroke-width="0.7" stroke-dasharray="0.8 0.9"/></svg>
<svg style="left:841.4px;top:637.4px" width="12.4" height="11.6" viewBox="0 0 12.4 11.6" ><g transform="rotate(-32 6.2 5.8)"><ellipse cx="4.2" cy="5.8" rx="3.5" ry="3.7" fill="none" stroke="#c4c4c4" stroke-width="1"/><ellipse cx="6" cy="5.8" rx="3.5" ry="3.7" fill="#1d1d1d" stroke="#c4c4c4" stroke-width="1"/><ellipse cx="8" cy="5.8" rx="3.6" ry="3.8" fill="#3c3c3c" stroke="#c4c4c4" stroke-width="1"/></g></svg>
<svg style="left:859.6px;top:636.4px" width="14" height="12.6" viewBox="0 0 14 12.6" ><rect x="1.4" y="2" width="11.8" height="10" rx="0.6" fill="none" stroke="#c4c4c4" stroke-width="1"/><path d="M4 0.4V2M7.3 0.4V2M10.6 0.4V2M0 5H1.4M0 8.6H1.4" stroke="#c4c4c4" stroke-width="0.9"/><path d="M3 4.2C6.6 4.2 7.6 10 11.6 10" fill="none" stroke="#c4c4c4" stroke-width="1"/></svg>
<svg style="left:884.5px;top:643.4px" width="10.4" height="12" viewBox="0 0 10.4 12" ><path d="M0.6 0.4H9.8V5.4L5.2 11.6L0.6 5.4Z" fill="#4a8ee8" opacity="0.9"/><path d="M0.6 0.4H9.8V5.4L5.2 11.6L0.6 5.4Z" fill="none" stroke="#2a62b8" stroke-width="0.6"/></svg>
<svg style="left:889.5px;top:669.6px" width="178" height="2.4" viewBox="0 0 178 2.4" ><path d="M0 1.6H178" stroke="#0d5a14" stroke-width="1.6" stroke-dasharray="1.4 2.06"/></svg>
<svg style="left:1070.4px;top:658.6px" width="9" height="11.4" viewBox="0 0 9 11.4" ><path d="M0.3 0.3H8.4V6.6L4.35 11L0.3 6.6Z" fill="#c2c2c2"/></svg>
<svg style="left:1068px;top:674.4px" width="11.4" height="10.6" viewBox="0 0 11.4 10.6" ><path d="M0.6 6L5.6 1.2V3.4H10.8V8H7.6" fill="#c2c2c2"/><path d="M0.6 6L5.6 1.2" stroke="#c2c2c2" stroke-width="1"/><circle cx="5.2" cy="7.4" r="2.3" fill="#1d1d1d" stroke="#c2c2c2" stroke-width="1.1"/></svg>
<svg style="left:3.6px;top:1068px" width="11.6" height="12" viewBox="0 0 11.6 12" ><rect width="11.6" height="13" rx="2.6" fill="#303030"/></svg>
<svg style="left:19.3px;top:1068px" width="11.6" height="12" viewBox="0 0 11.6 12" ><rect width="11.6" height="13" rx="2.6" fill="#303030"/></svg>
<svg style="left:34.1px;top:1068px" width="11.6" height="12" viewBox="0 0 11.6 12" ><rect width="11.6" height="13" rx="2.6" fill="#303030"/></svg>
<svg style="left:5px;top:1069.6px" width="9.4" height="9.6" viewBox="0 0 9.4 9.6" ><rect x="0.5" y="0.5" width="5.4" height="5.4" fill="#303030" stroke="#c2c2c2" stroke-width="0.95"/><rect x="3.2" y="3.2" width="5.6" height="5.6" fill="#303030" stroke="#c2c2c2" stroke-width="0.95"/><rect x="4.6" y="5.6" width="2.8" height="1.6" fill="#c2c2c2"/></svg>
<svg style="left:20.4px;top:1069.4px" width="9.6" height="10" viewBox="0 0 9.6 10" ><circle cx="3.8" cy="3.9" r="3.2" fill="none" stroke="#c2c2c2" stroke-width="0.95"/><rect x="4" y="4.4" width="5" height="4.8" fill="#303030" stroke="#c2c2c2" stroke-width="0.95"/><path d="M4.2 9L8.8 4.6V9Z" fill="#c2c2c2"/></svg>
<svg style="left:35.6px;top:1069.2px" width="9" height="10.4" viewBox="0 0 9 10.4" ><path d="M3.4 0.5C2 0.5 2.2 1.4 2.2 2.6C2.2 4 2 4.7 0.7 5.1C2 5.5 2.2 6.2 2.2 7.6C2.2 8.8 2 9.7 3.4 9.7M5.4 0.5C6.8 0.5 6.6 1.4 6.6 2.6C6.6 4 6.8 4.7 8.1 5.1C6.8 5.5 6.6 6.2 6.6 7.6C6.6 8.8 6.8 9.7 5.4 9.7" fill="none" stroke="#c2c2c2" stroke-width="1.15" stroke-linejoin="miter"/></svg>
<svg style="left:49.6px;top:1069.6px" width="11" height="9" viewBox="0 0 11 9" ><path d="M0.6 7.6H8.4" stroke="#c2c2c2" stroke-width="1.2"/><path fill="#c2c2c2" d="M1.6 7.2C0.8 3.6 2.6 1 5 1C7.6 1 8.6 3.4 7.6 7.2Z"/><path d="M8.6 1.2L9.4 3.2M10.2 0.8V2.4" stroke="#c2c2c2" stroke-width="0.8"/></svg>
<svg style="left:888.5px;top:1071.6px" width="8" height="5" viewBox="0 0 8 5" ><path fill="#bdbdbd" d="M0 4.6L2.2 1.6L3.6 2.8L5 0.8L7.8 4.6Z"/></svg>
<svg style="left:904.8px;top:1070.4px" width="8.4" height="8.4" viewBox="0 0 8.4 8.4" ><circle cx="4.2" cy="4.2" r="3.2" fill="#1d1d1d" stroke="#d0d0d0" stroke-width="1.5"/></svg>
<svg style="left:952.6px;top:1071px" width="14" height="6" viewBox="0 0 14 6" ><path fill="#c6c6c6" d="M0 5.8L3.6 1L5.4 3.2L8.2 0.2L13.8 5.8Z"/><path d="M5.3 3.3L3.6 5.8" stroke="#1d1d1d" stroke-width="0.7"/></svg>
<div class="labels">
<span class="t" style="left:37px;top:614.85px;font-size:9.5px;color:#f0f0f0;transform:scaleX(0.893);">Comp 1</span>
<span class="t" style="left:112.5px;top:614.85px;font-size:9.5px;color:#b4b4b4;transform:scaleX(0.890);">Render Queue</span>
<span class="t" style="left:229.5px;top:614.85px;font-size:9.5px;color:#b4b4b4;transform:scaleX(0.903);">Comp BG Animated GIF</span>
<span class="t" style="left:9.8px;top:632.65px;font-size:11.3px;color:#4a8ee4;-webkit-text-stroke:0.35px #4a8ee4;transform:scaleX(1.071);">0:00:00:00</span>
<span class="t" style="left:8.3px;top:645.65px;font-size:8.5px;color:#285592;transform:scaleX(0.914);">00000 (25.00 fps)</span>
<span class="t" style="left:83.7px;top:661.75px;font-size:7.5px;color:#a8a8a8;font-style:italic;transform:scaleX(0.983);">#</span>
<span class="t" style="left:110px;top:661.60px;font-size:8px;color:#b4b4b4;transform:scaleX(0.885);">Source Name</span>
<span class="t" style="left:490.3px;top:659.10px;font-size:11px;color:#c4c4c4;font-family:'Liberation Serif',serif;font-style:italic;transform:scaleX(1.031);">fx</span>
<span class="t" style="left:566px;top:661.60px;font-size:8px;color:#b4b4b4;transform:scaleX(0.899);">Mode</span>
<span class="t" style="left:625px;top:661.60px;font-size:8px;color:#b4b4b4;transform:scaleX(0.818);">T</span>
<span class="t" style="left:639px;top:661.60px;font-size:8px;color:#b4b4b4;transform:scaleX(0.882);">Track Matte</span>
<span class="t" style="left:733.5px;top:661.60px;font-size:8px;color:#b4b4b4;transform:scaleX(0.916);">Parent &amp; Link</span>
<span class="t" style="left:826.5px;top:661.60px;font-size:8px;color:#b4b4b4;transform:scaleX(0.888);">Stretch</span>
<span class="t" style="left:893px;top:642.60px;font-size:8.4px;color:#b8b8b8;transform:scaleX(0.903);">0s</span>
<span class="t" style="left:956.5px;top:642.60px;font-size:8.4px;color:#b8b8b8;transform:scaleX(0.851);">02s</span>
<span class="t" style="left:1029px;top:642.60px;font-size:8.4px;color:#b8b8b8;transform:scaleX(0.888);">04s</span>
<span class="t" style="left:82.5px;top:1069.90px;font-size:9px;color:#b0b0b0;transform:scaleX(0.951);">Frame Render Time:</span>
<span class="t" style="left:167.5px;top:1069.90px;font-size:9px;color:#58d6a4;transform:scaleX(0.970);">0ms</span>
</div>
</section>
</body></html>
